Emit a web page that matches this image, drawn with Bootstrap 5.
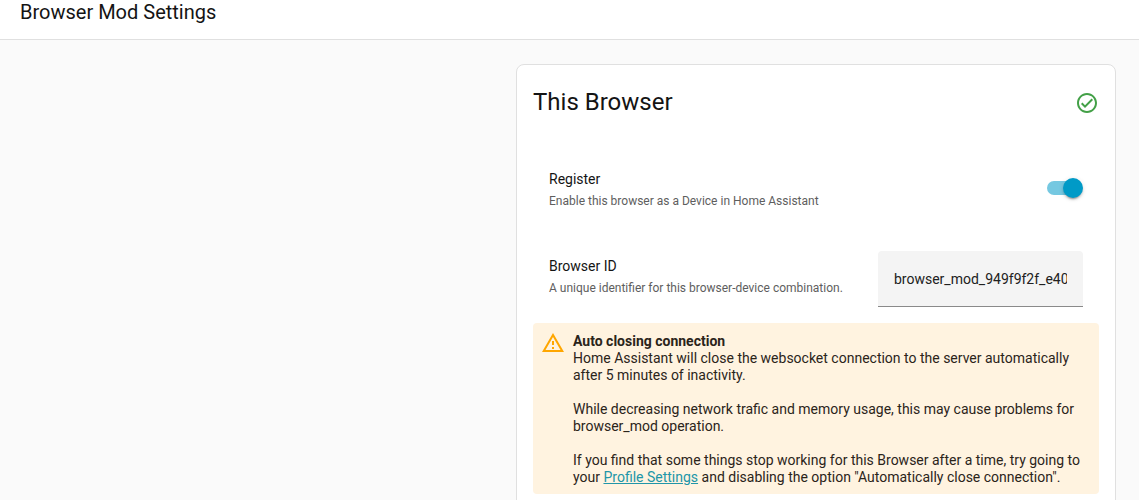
<!DOCTYPE html>
<html lang="en">
<head>
<meta charset="utf-8">
<meta name="viewport" content="width=device-width, initial-scale=1">
<title>Browser Mod Settings</title>
<link href="https://cdn.jsdelivr.net/npm/bootstrap@5.3.0/dist/css/bootstrap.min.css" rel="stylesheet">
<style>
  body { font-family: Roboto, "Liberation Sans", sans-serif; font-size: 14px; line-height: 17px; color: #141414; background: #fafafa; }
  .app-header { padding: 0 20px 15px; border-bottom: 1px solid #e0e0e0; }
  .app-title { font-size: 20px; line-height: 24px; font-weight: 400; }
  .page-scroll { scrollbar-width: none; padding: 24px 23px; }
  .settings-card { width: 100%; max-width: 600px; border: 1px solid #e0e0e0; border-radius: 8px; }
  .settings-title { font-size: 24px; line-height: 28px; font-weight: 400; padding-bottom: 2px; }
  .card-heading { padding: 23px 16px; }
  .setting-row { padding: 0 16px; min-height: 88px; }
  .toggle-row { min-height: 94px; }
  .toggle-row .setting-text { padding-top: 4px; }
  .field-row .setting-text { padding-bottom: 4px; }
  .setting-name { line-height: 20px; }
  .setting-note { font-size: 12px; line-height: 20px; margin-top: 2px; color: #5e5e5e; }
  .toggle { appearance: none; position: relative; width: 36px; height: 20px; margin: 0; cursor: pointer; background: none; }
  .toggle::before { content: ""; position: absolute; inset: 3px 2px 3px 0; border-radius: 7px; background: #75c8e1; }
  .toggle::after { content: ""; position: absolute; top: 0; left: 0; width: 20px; height: 20px; border-radius: 50%; background: #fff; box-shadow: 0 3px 1px -2px rgba(0,0,0,.2), 0 2px 2px rgba(0,0,0,.14), 0 1px 5px rgba(0,0,0,.12); }
  .toggle:checked::after { left: 16px; background: #009ac7; }
  .toggle:not(:checked)::before { background: #bdbdbd; }
  .id-field { width: 205px; height: 56px; padding: 0 16px; border: 0; border-bottom: 1px solid #8a8a8a; border-radius: 4px 4px 0 0; background: #f4f4f4; font-size: 14px; color: #212121; }
  .id-field:focus { background: #f4f4f4; box-shadow: none; border-color: #009ac7; }
  .notice { padding: 8px 16px 8px 8px; gap: 8px; border-radius: 4px; background: #fff3e0; color: #2b241a; }
  .notice-text { padding-top: 2px; }
  .notice-text p { margin-bottom: 17px; }
  .notice-text p:last-child { margin-bottom: 0; }
  .notice-title { font-weight: 700; }
  .notice a { color: #2196a8; }
</style>
</head>
<body>
<div class="d-flex flex-column vh-100">
  <header class="app-header bg-white">
    <h1 class="app-title m-0">Browser Mod Settings</h1>
  </header>
  <main class="page-scroll flex-grow-1 overflow-auto">
    <section class="settings-card bg-white ms-auto">
      <div class="card-heading d-flex align-items-center justify-content-between">
        <h2 class="settings-title m-0">This Browser</h2>
        <svg width="24" height="24" viewBox="0 0 24 24" fill="#43a047" role="img" aria-label="Registered"><path d="M12 2C6.5 2 2 6.500 2 12S6.500 22 12 22 22 17.500 22 12 17.500 2 12 2M12 20C7.590 20 4 16.410 4 12S7.590 4 12 4 20 7.590 20 12 16.410 20 12 20M16.590 7.580L10 14.170L7.410 11.590L6 13L10 17L18 9L16.590 7.580Z"/></svg>
      </div>
      <div class="px-3 pb-5">
        <div class="setting-row toggle-row d-flex align-items-center justify-content-between">
          <div class="setting-text">
            <label class="setting-name d-block" for="register">Register</label>
            <div class="setting-note">Enable this browser as a Device in Home Assistant</div>
          </div>
          <input class="toggle" type="checkbox" role="switch" id="register" checked>
        </div>
        <div class="setting-row field-row d-flex align-items-center justify-content-between gap-3">
          <div class="setting-text">
            <label class="setting-name d-block" for="browser-id">Browser ID</label>
            <div class="setting-note">A unique identifier for this browser-device combination.</div>
          </div>
          <input class="form-control id-field flex-shrink-0" type="text" id="browser-id" value="browser_mod_949f9f2f_e40c61a7">
        </div>
        <div class="notice d-flex" role="alert">
          <svg class="flex-shrink-0" width="24" height="24" viewBox="0 0 24 24" fill="#ffa600" aria-hidden="true"><path d="M12 2L1 21H23M12 6L19.530 19H4.470M11 10V14H13V10M11 16V18H13V16"/></svg>
          <div class="notice-text">
            <div class="notice-title">Auto closing connection</div>
            <p>Home Assistant will close the websocket connection to the server automatically after 5 minutes of inactivity.</p>
            <p>While decreasing network trafic and memory usage, this may cause problems for browser_mod operation.</p>
            <p>If you find that some things stop working for this Browser after a time, try going to your <a href="#profile">Profile Settings</a> and disabling the option "Automatically close connection".</p>
          </div>
        </div>
      </div>
    </section>
  </main>
</div>
<script src="https://cdn.jsdelivr.net/npm/bootstrap@5.3.0/dist/js/bootstrap.bundle.min.js"></script>
</body>
</html>
